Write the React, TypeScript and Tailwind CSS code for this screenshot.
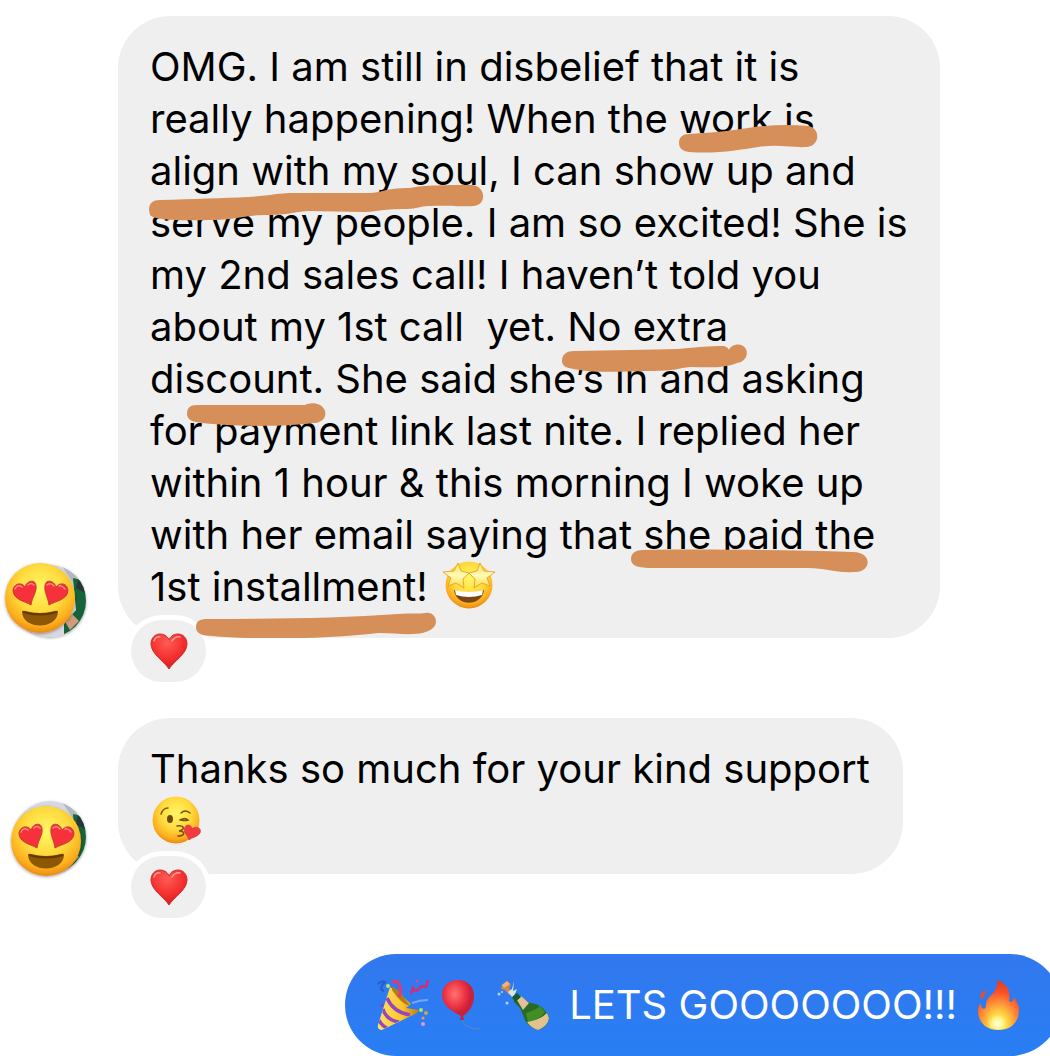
import type { ReactNode } from "react";

const STORY_LINES = [
  "OMG. I am still in disbelief that it is",
  "really happening! When the work is",
  "align with my soul, I can show up and",
  "serve my people. I am so excited! She is",
  "my 2nd sales call! I haven’t told you",
  "about my 1st call  yet. No extra",
  "discount. She said she’s in and asking",
  "for payment link last nite. I replied her",
  "within 1 hour & this morning I woke up",
  "with her email saying that she paid the",
];

// Marker strokes, drawn in the bubble's own 822 x 622 space
const MARKER_STROKES = [
  "M561 127C561 121 565 118 571 118C590 117 612 115 630 112C650 109 670 108 690 110C703 112 702 130 689 131C675 132 660 128 640 131C620 134 600 138 571 136C564 135 561 132 561 127Z",
  "M31 194C31 187 35 184 42 184C75 183 105 182 130 181C150 180 160 177 175 177H250C265 177 265 172 292 172C305 169 330 169 354 169C368 170 369 189 356 190C340 191 335 189 310 190C302 190 300 193 288 193C260 193 260 196 245 196L190 195C175 196 170 199 150 199C125 199 120 204 90 204C65 205 35 204 32 199Z",
  "M444 345C444 338 449 335 456 335C495 334 530 334 560 333C580 331 590 330 606 330Q610 331 611 334C613 328 624 326 628 333C631 340 626 346 619 347C605 353 585 351 572 351C560 352 560 355 530 355C495 356 470 357 451 352C446 351 444 348 444 345Z",
  "M69 398C69 392 72 389 79 389H187C192 386 204 386 207 395C209 402 203 407 195 407C165 411 110 411 78 406C72 405 69 402 69 398Z",
  "M513 543C513 537 518 534 525 534C590 533 660 534 735 536C754 536 754 555 738 556C715 557 708 552 690 552H622L535 552C520 552 513 550 513 543Z",
  "M78 611C78 605 82 603 89 603C155 603 225 602 280 598C295 597 301 598 307 597C316 595 321 605 316 611C305 623 275 616 260 617C210 623 140 624 94 620C83 620 78 617 78 611Z",
];

const Heart = ({ className = "" }: { className?: string }) => (
  <svg viewBox="0 0 38 37" className={className} role="img" aria-label="Red heart">
    <defs>
      <radialGradient id="heartFill" cx="45%" cy="25%" r="80%">
        <stop offset="0" stopColor="#ff5c55" />
        <stop offset=".6" stopColor="#f22d2b" />
        <stop offset="1" stopColor="#c91a22" />
      </radialGradient>
    </defs>
    <path d="M19 36C14 28 1 21 1 11C1 5 5 1 10 1C15 1 18 4 19 7C20 4 23 1 28 1C33 1 37 5 37 11C37 21 24 28 19 36Z" fill="url(#heartFill)" stroke="#cf3035" />
    <path d="M4 8Q6 3 10 4M22 8Q25 3 30 4" fill="none" stroke="#ff9b92" strokeWidth="1.5" strokeLinecap="round" />
  </svg>
);

const FaceGradient = ({ id }: { id: string }) => (
  <radialGradient id={id} cx="50%" cy="36%" r="65%">
    <stop offset="0" stopColor="#fff766" />
    <stop offset=".5" stopColor="#ffdb3d" />
    <stop offset=".82" stopColor="#fcae1d" />
    <stop offset="1" stopColor="#e98513" />
  </radialGradient>
);

// Photo avatar with the heart-eyes face stacked on it
const Avatar = ({ id, x, y }: { id: string; x: number; y: number }) => (
  <svg viewBox="0 0 90 80" className="h-20 w-[90px] overflow-visible" role="img" aria-label="Heart eyes">
    <defs>
      <FaceGradient id={`${id}-face`} />
      <clipPath id={`${id}-clip`}>
        <circle cx="50" cy="43" r="36" />
      </clipPath>
      <filter id={`${id}-shadow`} x="-20%" y="-20%" width="140%" height="140%">
        <feDropShadow dx="0" dy="1" stdDeviation="1.5" floodOpacity=".35" />
      </filter>
    </defs>
    <g filter={`url(#${id}-shadow)`}>
      <g clipPath={`url(#${id}-clip)`}>
        <rect width="90" height="80" fill="#d6d9e2" />
        <path d="M60 5L90 15V30L74 26Z" fill="#b3b8bc" />
        <path d="M73 20L90 24V72L64 80V66L76 52Z" fill="#17633a" />
        <path d="M78 22L90 28V38L76 30Z" fill="#29343a" />
        <path d="M72 56L79 63L70 72L64 62Z" fill="#d29b7d" />
      </g>
    </g>
    <g transform={`translate(${x} ${y})`}>
      <circle r="35" fill={`url(#${id}-face)`} filter={`url(#${id}-shadow)`} />
      <g fill="#f5323b" stroke="#c93a2f" strokeWidth="1" strokeLinejoin="round">
        <path d="M-9 7C-15 3 -27 2 -27 -8C-26 -15 -18 -16 -15 -11C-13 -18 -4 -19 -4 -12C-3 -6 -8 -1 -9 7Z" />
        <path d="M9 7C15 3 28 2 28 -8C27 -15 20 -16 16 -11C14 -18 5 -19 5 -12C4 -6 8 -1 9 7Z" />
      </g>
      <path d="M-25 -9Q-23 -14 -18 -11M-12 -13Q-9 -16 -6 -13M7 -13Q11 -16 14 -12M19 -12Q22 -13 25 -9" fill="none" stroke="#ff8580" strokeWidth="1.5" strokeLinecap="round" />
      <path d="M-18 14Q-18 12 -15 13Q0 17 15 13Q18 12 18 14C17 32 -17 32 -18 14Z" fill="#8d5704" />
      <path d="M-17 14Q0 19 17 14" fill="none" stroke="#633a05" strokeWidth="2" />
    </g>
  </svg>
);

const emojiClass = "inline-block size-[52px] shrink-0 align-top";

const StarStruck = () => (
  <svg viewBox="0 0 52 52" className={emojiClass} role="img" aria-label="Star-struck">
    <defs>
      <FaceGradient id="starFace" />
      <linearGradient id="starFill" x2="0" y2="1">
        <stop stopColor="#ffe458" />
        <stop offset=".5" stopColor="#fffbb8" />
        <stop offset="1" stopColor="#ffd93f" />
      </linearGradient>
    </defs>
    <circle cx="26" cy="24" r="23.5" fill="url(#starFace)" />
    <g fill="url(#starFill)" stroke="#e09a22" strokeWidth=".8" strokeLinejoin="round">
      <path d="M15 2L18 10L26 12L20 18L21 27L13 22L5 25L8 17L0 11L11 10Z" />
      <path d="M37 2L41 10L52 11L44 17L47 25L39 22L31 27L32 18L26 12L34 10Z" />
    </g>
    <path d="M11 29Q26 34 41 29C39 46 13 46 11 29Z" fill="#794615" />
    <path d="M12 29Q26 33 40 29L39 34Q26 38 13 34Z" fill="#fff" />
  </svg>
);

const BlowingKiss = () => (
  <svg viewBox="0 0 52 52" className={emojiClass} role="img" aria-label="Face blowing a kiss">
    <defs>
      <FaceGradient id="kissFace" />
    </defs>
    <circle cx="26" cy="25" r="23.5" fill="url(#kissFace)" />
    <g fill="none" stroke="#79500d" strokeWidth="1.5" strokeLinecap="round">
      <path d="M11 19Q13 13 18 13M31 18Q35 14 40 18" />
      <path d="M30 25Q35 22 38 25Q34 26 31 25" />
      <path d="M27 31C35 30 35 35 29 36C36 36 35 41 28 41" />
    </g>
    <ellipse cx="20" cy="24" rx="3" ry="4" fill="#714708" />
    <path d="M39 45C39 41 32 38 35 32C38 28 42 31 42 34C46 30 52 33 50 38C48 42 42 42 39 45Z" fill="#f23a42" stroke="#d43831" strokeWidth=".7" />
  </svg>
);

const PartyPopper = () => (
  <svg viewBox="0 0 52 52" className={emojiClass} role="img" aria-label="Party popper">
    <defs>
      <linearGradient id="coneFill">
        <stop stopColor="#ffe268" />
        <stop offset=".6" stopColor="#f9c52d" />
        <stop offset="1" stopColor="#bd7b18" />
      </linearGradient>
      <clipPath id="coneClip">
        <path d="M13 8L42 32L5 51Q0 51 1 46Z" />
      </clipPath>
    </defs>
    <path d="M13 8L22 14L34 25L29 29L42 31L40 34L5 51Q0 51 1 46Z" fill="url(#coneFill)" />
    <g clipPath="url(#coneClip)" fill="none" stroke="#9a45b8" strokeWidth="3.5">
      <path d="M10 19Q16 33 33 36M6 30Q9 41 22 43M2 41Q5 47 10 49" />
    </g>
    <path d="M15 8Q21 9 29 21L33 27Q24 25 15 11Z" fill="#b67b1a" />
    <path d="M15 4Q20 0 22 5Q25 10 22 18" fill="none" stroke="#e23778" strokeWidth="3" />
    <path d="M34 15L36 9Q39 14 42 10Q44 6 49 8L51 1" fill="none" stroke="#d32c79" strokeWidth="2.5" />
    <path d="M1 5Q5 1 8 3Q1 10 7 12" fill="none" stroke="#245ccc" strokeWidth="2" />
    <path d="M35 24Q43 21 51 21" fill="none" stroke="#7da4fb" strokeWidth="2" />
    <circle cx="11" cy="7" r="2" fill="#b6ea68" />
    <circle cx="44" cy="31" r="2" fill="#b4df65" />
    <circle cx="49" cy="34" r="2" fill="#cfa15b" />
    <circle cx="46" cy="39" r="1.5" fill="#e7a52d" />
    <circle cx="46" cy="45" r="2" fill="#db9bed" />
    <circle cx="5" cy="26" r="1.5" fill="#943bba" />
    <circle cx="40" cy="2" r="1.5" fill="#dc4c83" />
  </svg>
);

const Balloon = () => (
  <svg viewBox="0 0 52 52" className={emojiClass} role="img" aria-label="Balloon">
    <defs>
      <radialGradient id="balloonFill" cx="40%" cy="35%">
        <stop stopColor="#ff7372" />
        <stop offset=".6" stopColor="#ef3746" />
        <stop offset="1" stopColor="#cc1f39" />
      </radialGradient>
    </defs>
    <path d="M21 39Q22 50 39 50" fill="none" stroke="#6186bd" strokeWidth="1" />
    <path d="M17 1C27 1 33 8 33 17C33 27 27 34 22 37L23 41L19 41L20 37C10 32 1 26 1 16C1 7 8 1 17 1Z" fill="url(#balloonFill)" />
  </svg>
);

const Champagne = () => (
  <svg viewBox="0 0 52 52" className={emojiClass} role="img" aria-label="Bottle with popping cork">
    <path d="M18 20L23 17L33 24Q45 24 52 38Q52 47 41 51Q29 48 26 36L23 29L17 23Z" fill="#286b24" />
    <path d="M20 21L24 17L32 24L26 31Z" fill="#e3c098" />
    <path d="M29 34Q39 31 43 27L48 33Q43 41 31 43Z" fill="#408e24" />
    <path d="M30 43Q43 41 50 34L52 39Q51 47 41 51Q34 49 30 43Z" fill="#e2c28d" />
    <path d="M15 18L20 14L24 18L18 23Z" fill="#155c25" />
    <path d="M5 6L10 2L14 6L12 9L16 13L12 16L8 11L4 10Z" fill="#ce8851" />
    <path d="M5 6L10 2L13 5L7 9Z" fill="#efb27b" />
    <path d="M11 13L15 10L14 14L17 2L16 12L20 10L18 15L15 18Z" fill="#d8e7ec" />
    <g fill="#b3d6fa">
      <circle cx="2" cy="15" r="1.5" />
      <circle cx="10" cy="24" r="1.5" />
      <circle cx="5" cy="13" r="1" />
    </g>
  </svg>
);

const Fire = () => (
  <svg viewBox="0 0 44 52" className="h-[52px] w-11 shrink-0" role="img" aria-label="Fire">
    <defs>
      <radialGradient id="fireFill" cx="50%" cy="88%" r="85%">
        <stop stopColor="#fff79b" />
        <stop offset=".25" stopColor="#ffd840" />
        <stop offset=".5" stopColor="#ff9239" />
        <stop offset=".75" stopColor="#fa5226" />
        <stop offset="1" stopColor="#e63c21" />
      </radialGradient>
      <radialGradient id="fireCore" cy="80%">
        <stop stopColor="#fffef0" />
        <stop offset=".5" stopColor="#fff276" />
        <stop offset="1" stopColor="#ffb83d" stopOpacity="0" />
      </radialGradient>
    </defs>
    <path d="M20 1C31 5 34 13 32 22C35 25 36 21 37 18C42 25 43 31 41 38C38 47 31 51 21 51C9 51 1 43 1 32C1 29 2 26 3 24L5 29C8 31 9 29 9 25C10 16 22 14 20 1Z" fill="url(#fireFill)" />
    <path d="M4 18C2 15 6 12 9 11C7 15 8 19 4 20Z" fill="#f14a27" />
    <path d="M21 24C23 31 28 34 31 29C34 37 36 50 21 50C7 50 5 39 12 33C12 37 17 38 18 33C19 29 18 28 21 24Z" fill="url(#fireCore)" />
  </svg>
);

const Reaction = () => (
  <div className="relative ml-[131px] -mt-[18px] flex h-[62px] w-[75px] items-center justify-center rounded-full bg-[#efefef] ring-[5px] ring-white">
    <Heart className="h-[37px] w-[38px]" />
  </div>
);

type IncomingProps = { avatar: ReactNode; bubbleClass: string; children: ReactNode };

const Incoming = ({ avatar, bubbleClass, children }: IncomingProps) => (
  <article>
    <div className="flex items-end">
      <div className="w-[118px] shrink-0">{avatar}</div>
      <div className={`relative w-full rounded-[52px] bg-[#efefef] px-8 pt-[25px] ${bubbleClass}`}>{children}</div>
    </div>
    <Reaction />
  </article>
);

const App = () => {
  return (
    <main className="flex flex-col gap-9 overflow-hidden bg-white pt-4 font-['Inter','Liberation_Sans',sans-serif] text-[40px] leading-[52px] text-black">
      <Incoming avatar={<Avatar id="first" x={40} y={40} />} bubbleClass="max-w-[822px] pb-[25px]">
        <p className="whitespace-pre">
          {STORY_LINES.map((line) => (
            <span key={line} className="block">
              {line}
            </span>
          ))}
          <span className="flex gap-1">
            1st installment! <StarStruck />
          </span>
        </p>
        <svg viewBox="0 0 822 622" className="absolute inset-0 z-10 w-full" fill="#d68f59" aria-hidden="true">
          {MARKER_STROKES.map((d) => (
            <path key={d} d={d} />
          ))}
        </svg>
      </Incoming>

      <Incoming avatar={<Avatar id="second" x={46} y={47} />} bubbleClass="max-w-[785px] pb-[27px]">
        <p>
          Thanks so much for your kind support
          <br />
          <BlowingKiss />
        </p>
      </Incoming>

      <article className="-mr-[11px] flex items-center self-end rounded-full bg-linear-to-b from-[#3278ee] to-[#287ef4] py-[25px] pr-10 pl-8 text-white">
        <PartyPopper />
        <span className="mr-1 ml-3 flex">
          <Balloon />
        </span>
        <Champagne />
        <p className="mx-5 whitespace-nowrap">LETS GOOOOOOO!!!</p>
        <Fire />
      </article>
    </main>
  );
};

export default App;
